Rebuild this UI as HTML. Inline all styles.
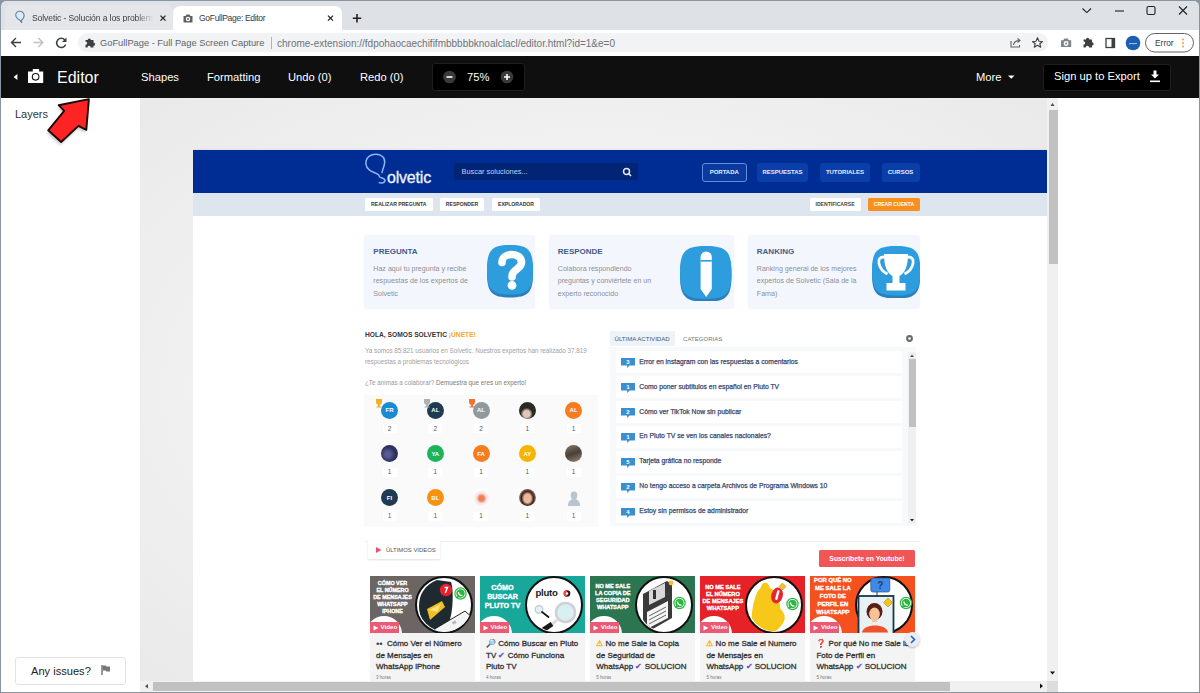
<!DOCTYPE html>
<html><head><meta charset="utf-8">
<style>
*{margin:0;padding:0;box-sizing:border-box}
html,body{width:1200px;height:693px;overflow:hidden;background:#fff;font-family:"Liberation Sans",sans-serif}
.a{position:absolute}
.t{position:absolute;white-space:nowrap;line-height:1}
</style></head><body>
<!-- window frame -->
<div class="a" style="left:0;top:0;width:1200px;height:693px;background:#8a95a2"></div>
<!-- tab strip -->
<div class="a" style="left:1px;top:1px;width:1198px;height:29px;background:#dee1e6;border-radius:5px 5px 0 0"></div>
<!-- inactive tab -->
<div class="a" style="left:5px;top:5px;width:168px;height:25px;background:#e4e6ea;border-radius:6px 6px 0 0"></div>
<!-- active tab -->
<div class="a" style="left:173px;top:6px;width:168.5px;height:24px;background:#fff;border-radius:7px 7px 0 0"></div>
<div class="t" style="left:32px;top:13.5px;font-size:8.6px;letter-spacing:-0.12px;color:#3c4043;width:122px;overflow:hidden;-webkit-mask-image:linear-gradient(90deg,#000 85%,transparent)">Solvetic - Solución a los problem</div>
<div class="t" style="left:199px;top:13.5px;font-size:8.6px;letter-spacing:-0.35px;color:#3c4043">GoFullPage: Editor</div>
<!-- toolbar -->
<div class="a" style="left:1px;top:30px;width:1198px;height:26px;background:#fff"></div>
<div class="a" style="left:78px;top:33px;width:970px;height:19px;background:#f1f3f4;border-radius:10px"></div>
<div class="t" style="left:100px;top:39px;font-size:9.3px;color:#5f6368">GoFullPage - Full Page Screen Capture</div>
<div class="a" style="left:270.5px;top:37px;width:1px;height:12px;background:#b0b4b8"></div>
<div class="t" style="left:277px;top:39px;font-size:10px;color:#6f7378">chrome-extension://fdpohaocaechififmbbbbbknoalclacl/editor.html?id=1&amp;e=0</div>


<!-- editor bar -->
<div class="a" style="left:1px;top:56px;width:1198px;height:42px;background:#0f0f0f"></div>
<div class="t" style="left:57px;top:70px;font-size:16px;color:#fff">Editor</div>
<div class="t" style="left:141px;top:72px;font-size:11.2px;color:#fff">Shapes</div>
<div class="t" style="left:207px;top:72px;font-size:11.2px;color:#fff">Formatting</div>
<div class="t" style="left:288px;top:72px;font-size:11.2px;color:#fff">Undo (0)</div>
<div class="t" style="left:360px;top:72px;font-size:11.2px;color:#fff">Redo (0)</div>
<div class="a" style="left:432px;top:63px;width:93px;height:28px;background:#000;border:1px solid #1e1e1e;border-radius:3px"></div>
<div class="t" style="left:467px;top:72px;font-size:11.2px;color:#fff">75%</div>
<div class="t" style="left:976px;top:72px;font-size:11.2px;color:#fff">More</div>
<div class="a" style="left:1042.5px;top:63.5px;width:128.5px;height:27px;background:#000;border:1px solid #1e1e1e;border-radius:3px"></div>
<div class="t" style="left:1054px;top:70.8px;font-size:11.2px;color:#fff">Sign up to Export</div>

<!-- chrome icons -->
<svg class="a" style="left:0;top:0" width="1200" height="98" viewBox="0 0 1200 98">
 <!-- favicon -->
 <path d="M21.3 20.5 C23.5 18.5 24.8 15.5 23.5 13.2 C22 10.8 17.8 10.6 16.3 13 C15 15 16 18 18.5 19.3 C19.8 20 20.6 20.6 21 21.8" fill="#dcebfb" stroke="#5f7f9f" stroke-width="1.1" stroke-linecap="round"/>
 <circle cx="21.6" cy="22" r="0.8" fill="#3f5f7f"/>
 <!-- close x inactive -->
 <g stroke="#202124" stroke-width="1.3"><path d="M160.5 15.6 L165.5 20.6 M165.5 15.6 L160.5 20.6"/></g>
 <!-- tab camera -->
 <path d="M183.5 16 h2 l1-1.6 h3 l1 1.6 h2 v6.5 h-9z" fill="#5f6368"/>
 <circle cx="188" cy="19" r="2.2" fill="#fff"/><circle cx="188" cy="19" r="1" fill="#5f6368"/>
 <!-- close x active -->
 <g stroke="#202124" stroke-width="1.3"><path d="M328 15.6 L333 20.6 M333 15.6 L328 20.6"/></g>
 <!-- new tab + -->
 <g stroke="#202124" stroke-width="1.6"><path d="M357 14 v8.4 M352.8 18.2 h8.4"/></g>
 <!-- window controls -->
 <g stroke="#202124" stroke-width="1.1" fill="none">
  <path d="M1082.5 8.5 L1086.8 12.6 L1091 8.5"/>
  <path d="M1115 11 h9"/>
  <rect x="1147" y="6.5" width="8" height="8" rx="1.5"/>
  <path d="M1179 6.5 L1187 14.5 M1187 6.5 L1179 14.5"/>
 </g>
 <!-- back/fwd/reload -->
 <g stroke="#3c4043" stroke-width="1.4" fill="none">
  <path d="M21 42.5 H11.8 M16 38 L11.5 42.5 L16 47"/>
 </g>
 <g stroke="#bdc1c6" stroke-width="1.4" fill="none">
  <path d="M33.5 42.5 H42.5 M38.3 38 L42.8 42.5 L38.3 47"/>
 </g>
 <g stroke="#3c4043" stroke-width="1.5" fill="none">
  <path d="M64.8 40 A4.6 4.6 0 1 0 65.6 44.5"/>
 </g>
 <path d="M66.5 37.5 v4.5 h-4.5z" fill="#3c4043"/>
 <!-- puzzle omnibox -->
 <path d="M85.5 40 h2.2 a1.6 1.6 0 1 1 3.2 0 h2.6 v2.6 a1.6 1.6 0 1 1 0 3.2 v1.6 h-2.8 a1.6 1.6 0 1 0 -3.2 0 h-2 v-2.6 a1.6 1.6 0 1 0 0 -3.2z" fill="#3c4043"/>
 <!-- share -->
 <g stroke="#5f6368" stroke-width="1.1" fill="none">
  <path d="M1011 41 v6 h8.5 v-2"/>
  <path d="M1013.5 45 c0.5-3 2.5-4.5 6-4.5 M1017.5 38.5 L1020 40.5 L1017.5 42.5"/>
 </g>
 <!-- star -->
 <path d="M1037.5 37.8 L1039 41.2 L1042.5 41.5 L1039.8 43.7 L1040.7 47.2 L1037.5 45.3 L1034.3 47.2 L1035.2 43.7 L1032.5 41.5 L1036 41.2Z" fill="none" stroke="#3c4043" stroke-width="1.1" stroke-linejoin="round"/>
 <!-- camera toolbar -->
 <path d="M1061 40.2 h2.3 l1.1-1.8 h3.4 l1.1 1.8 h2.3 v6.8 h-10.2z" fill="#80868b"/>
 <circle cx="1066.1" cy="43.5" r="2.4" fill="#fff"/><circle cx="1066.1" cy="43.5" r="1.1" fill="#80868b"/>
 <!-- puzzle toolbar -->
 <path d="M1083.5 39.5 h2.4 a1.7 1.7 0 1 1 3.4 0 h2.7 v2.7 a1.7 1.7 0 1 1 0 3.4 v1.8 h-2.9 a1.7 1.7 0 1 0 -3.4 0 h-2.2 v-2.8 a1.7 1.7 0 1 0 0 -3.4z" fill="#3c4043"/>
 <!-- side panel -->
 <rect x="1106" y="38.5" width="8.5" height="9" fill="none" stroke="#3c4043" stroke-width="1.3"/>
 <rect x="1111.5" y="38.5" width="3" height="9" fill="#3c4043"/>
 <!-- avatar -->
 <circle cx="1133" cy="43" r="7.3" fill="#1a5fb4"/>
 <path d="M1129 43.6 h8" stroke="#cfe0f5" stroke-width="0.8"/>
 <!-- error pill -->
 <rect x="1145.5" y="33.5" width="48" height="18.5" rx="9.25" fill="#fff" stroke="#5f6368" stroke-width="1"/>
 <circle cx="1183" cy="39.5" r="0.9" fill="#e8912d"/><circle cx="1183" cy="43" r="0.9" fill="#e8912d"/><circle cx="1183" cy="46.5" r="0.9" fill="#e8912d"/>
 <!-- editor bar icons -->
 <path d="M17.4 74 L13.6 77 L17.4 80z" fill="#fff"/>
 <path d="M28 71.6 h4.8 v-2.5 h6.3 v2.5 h4.1 v11.4 h-15.2z" fill="#fff"/>
 <circle cx="35.6" cy="76.8" r="3.3" fill="none" stroke="#0f0f0f" stroke-width="1.1"/>
 <!-- zoom -->
 <circle cx="449.5" cy="77" r="6.3" fill="#3a3a3a"/>
 <path d="M446.5 77 h6" stroke="#fff" stroke-width="1.6"/>
 <circle cx="507" cy="77" r="6.3" fill="#3a3a3a"/>
 <path d="M504 77 h6 M507 74 v6" stroke="#fff" stroke-width="1.6"/>
 <!-- caret -->
 <path d="M1008 75.5 h6.5 l-3.25 3.3z" fill="#fff"/>
 <!-- download -->
 <path d="M1153.5 70.5 h3 v4 h2.5 l-4 4 l-4-4 h2.5z" fill="#fff"/>
 <rect x="1150" y="80.5" width="10" height="1.6" fill="#fff"/>
</svg>
<div class="t" style="left:1155px;top:38.5px;font-size:8.4px;color:#3c4043">Error</div>

<!-- sidebar -->
<div class="a" style="left:1px;top:98px;width:139px;height:594px;background:#fff"></div>
<div class="t" style="left:15px;top:108.5px;font-size:11px;color:#333">Layers</div>
<div class="a" style="left:15px;top:657px;width:111px;height:28px;background:#fff;border:1px solid #e2e2e2;border-radius:3px"></div>
<div class="t" style="left:31px;top:666px;font-size:11.1px;color:#222">Any issues?</div>

<!-- canvas -->
<div class="a" style="left:140px;top:98px;width:907px;height:583px;background:radial-gradient(ellipse 75% 75% at 50% 50%,#f4f4f4 40%,#e8e8e8 100%)"></div>
<!-- right panel -->
<div class="a" style="left:1058px;top:98px;width:141px;height:594px;background:#fff"></div>
<!-- v scrollbar -->
<div class="a" style="left:1047px;top:98px;width:11px;height:583px;background:#f0f0f0"></div>
<div class="a" style="left:1049px;top:110px;width:9px;height:154px;background:#c1c1c1"></div>
<!-- h scrollbar -->
<div class="a" style="left:140px;top:681px;width:918px;height:11px;background:#f0f0f0"></div>
<div class="a" style="left:153px;top:682px;width:797px;height:9px;background:#c1c1c1"></div>

<svg class="a" style="left:0;top:0;z-index:2" width="1200" height="693">
 <path d="M1050.5 106 L1052.5 103 L1054.5 106z" fill="#505050"/>
 <path d="M1050 671.5 L1052.5 674.5 L1055 671.5z" fill="#111"/>
 <path d="M148 684 L145 686.2 L148 688.4z" fill="#505050"/>
 <path d="M1040 683.5 L1043 686 L1040 688.5z" fill="#111"/>
 <rect x="1047" y="681" width="11" height="11" fill="#dcdcdc"/>
</svg>
<!-- red arrow -->
<svg class="a" style="left:0;top:90px;z-index:5" width="120" height="70" viewBox="0 90 120 70">
 <defs><filter id="sh" x="-30%" y="-30%" width="160%" height="160%"><feGaussianBlur stdDeviation="1.6"/></filter></defs>
 <path d="M88.9 99.1 L86.3 129.8 L78.5 125.9 L61.2 142 L48.2 130.3 L64.2 110.8 L58.6 105.2 Z" fill="rgba(0,0,0,0.22)" transform="translate(-1,3)" filter="url(#sh)"/>
 <path d="M88.9 99.1 L86.3 129.8 L78.5 125.9 L61.2 142 L48.2 130.3 L64.2 110.8 L58.6 105.2 Z" fill="#ff2424" stroke="#1e0808" stroke-width="1.9" stroke-linejoin="round"/>
</svg>
<svg class="a" style="left:100px;top:664px" width="12" height="12"><path d="M2 1 v10" stroke="#666" stroke-width="1.3"/><path d="M2.5 1.5 h3 l1 1 h3.5 v5 h-3.5 l-1-1 h-3z" fill="#777"/></svg>
<!-- page -->
<div class="a" style="left:0;top:0;width:1200px;height:693px;clip-path:inset(98px 153px 12px 193px);z-index:1">
<div class="a" style="left:193px;top:150px;width:854px;height:531px;background:#fff;box-shadow:0 0 3px rgba(0,0,0,0.10)"></div>
<!-- PAGE START -->
<div class="a" style="left:193px;top:150px;width:854px;height:43px;background:#002d94"></div>
<div class="a" style="left:193px;top:193px;width:854px;height:22.5px;background:#dde5ef"></div>
<svg class="a" style="left:360px;top:150px" width="80" height="40" viewBox="0 0 80 40">
<path d="M22 22.5 C23.5 17 27 10.5 22.5 6.5 C18 3 8.5 3.5 6.2 10.5 C4.5 16.5 9 20.5 14 22.5 C17 23.8 19.5 24.5 19.2 26.3 C19 27.8 24.8 27.8 25 30.2 C25.2 32.8 21 33.5 19.2 32.6" fill="none" stroke="#8fb4f5" stroke-width="1.5" stroke-linecap="round"/>
</svg>
<div class="t" style="left:387px;top:170px;font-size:16px;color:#eef3ff;letter-spacing:-0.2px;-webkit-text-stroke:0.3px #eef3ff">olvetic</div>
<div class="a" style="left:454px;top:162.5px;width:184px;height:17.5px;background:#022474;border-radius:2px"></div>
<div class="t" style="left:461.5px;top:168px;font-size:7.4px;color:#c5d2f0">Buscar soluciones...</div>
<svg class="a" style="left:620px;top:165px" width="14" height="14"><circle cx="6.5" cy="6.5" r="3" fill="none" stroke="#e6ecff" stroke-width="1.5"/><path d="M8.7 8.7 L11 11" stroke="#e6ecff" stroke-width="1.6"/></svg>
<div class="a" style="left:701.5px;top:162.5px;width:45.5px;height:19px;background:#0a3a9e;border:1px solid #5f8de0;border-radius:3px;"></div>
<div class="t" style="left:701.5px;top:169.3px;width:45.5px;text-align:center;font-size:6px;font-weight:700;color:#e8efff">PORTADA</div>
<div class="a" style="left:757px;top:162.5px;width:51px;height:19px;background:#0a3ea8;border-radius:3px;"></div>
<div class="t" style="left:757px;top:169.3px;width:51px;text-align:center;font-size:6px;font-weight:700;color:#e8efff">RESPUESTAS</div>
<div class="a" style="left:820px;top:162.5px;width:50px;height:19px;background:#0a3ea8;border-radius:3px;"></div>
<div class="t" style="left:820px;top:169.3px;width:50px;text-align:center;font-size:6px;font-weight:700;color:#e8efff">TUTORIALES</div>
<div class="a" style="left:881.5px;top:162.5px;width:38px;height:19px;background:#0a3ea8;border-radius:3px;"></div>
<div class="t" style="left:881.5px;top:169.3px;width:38px;text-align:center;font-size:6px;font-weight:700;color:#e8efff">CURSOS</div>
<div class="a" style="left:365px;top:197.5px;width:67.5px;height:13px;background:#fff;border-radius:1.5px"></div>
<div class="t" style="left:365px;top:202.2px;width:67.5px;text-align:center;font-size:5.1px;font-weight:700;color:#333">REALIZAR PREGUNTA</div>
<div class="a" style="left:440px;top:197.5px;width:44px;height:13px;background:#fff;border-radius:1.5px"></div>
<div class="t" style="left:440px;top:202.2px;width:44px;text-align:center;font-size:5.1px;font-weight:700;color:#333">RESPONDER</div>
<div class="a" style="left:492px;top:197.5px;width:48px;height:13px;background:#fff;border-radius:1.5px"></div>
<div class="t" style="left:492px;top:202.2px;width:48px;text-align:center;font-size:5.1px;font-weight:700;color:#333">EXPLORADOR</div>
<div class="a" style="left:809.5px;top:197.5px;width:51px;height:13px;background:#fff;border-radius:1.5px"></div>
<div class="t" style="left:809.5px;top:202.2px;width:51px;text-align:center;font-size:5.1px;font-weight:700;color:#444">IDENTIFICARSE</div>
<div class="a" style="left:868px;top:197.5px;width:52px;height:13px;background:#f7901e;border-radius:1.5px"></div>
<div class="t" style="left:868px;top:202.2px;width:52px;text-align:center;font-size:5.1px;font-weight:700;color:#fff">CREAR CUENTA</div>
<div class="a" style="left:364px;top:235px;width:171px;height:74px;background:#f3f7fd;border-radius:3px;box-shadow:0 0 2px rgba(0,0,0,0.04)"></div>
<div class="t" style="left:373.3px;top:247.5px;font-size:8px;font-weight:700;color:#3f5b8e">PREGUNTA</div>
<div class="t" style="left:373.3px;top:265.5px;font-size:7.1px;color:#8a8f99">Haz aquí tu pregunta y recibe</div>
<div class="t" style="left:373.3px;top:278.3px;font-size:7.1px;color:#8a8f99">respuestas de los expertos de</div>
<div class="t" style="left:373.3px;top:291.1px;font-size:7.1px;color:#8a8f99">Solvetic</div>
<svg class="a" style="left:486.7px;top:245px" width="46" height="52.5" viewBox="0 0 46 52.5"><path d="M23.0 0 C41.4 0 46.0 5.0 46.0 24.8 C46.0 44.6 41.4 49.5 23.0 49.5 C4.6 49.5 0 44.6 0 24.8 C0 5.0 4.6 0 23.0 0Z" fill="#2a7fbf" transform="translate(0,3)"/><path d="M23.0 0 C41.4 0 46.0 5.0 46.0 24.8 C46.0 44.6 41.4 49.5 23.0 49.5 C4.6 49.5 0 44.6 0 24.8 C0 5.0 4.6 0 23.0 0Z" fill="#2e9ddd"/><path d="M15 17.5 C15 7 34.5 6.5 34.5 17.5 C34.5 24 25 24.5 25 31 L25 32" fill="none" stroke="#fff" stroke-width="7.6" stroke-linecap="round"/><circle cx="25" cy="40.3" r="4.4" fill="#fff"/></svg>
<div class="a" style="left:548.5px;top:235px;width:185px;height:74px;background:#f3f7fd;border-radius:3px;box-shadow:0 0 2px rgba(0,0,0,0.04)"></div>
<div class="t" style="left:557.8px;top:247.5px;font-size:8px;font-weight:700;color:#3f5b8e">RESPONDE</div>
<div class="t" style="left:557.8px;top:265.5px;font-size:7.1px;color:#8a8f99">Colabora respondiendo</div>
<div class="t" style="left:557.8px;top:278.3px;font-size:7.1px;color:#8a8f99">preguntas y conviértete en un</div>
<div class="t" style="left:557.8px;top:291.1px;font-size:7.1px;color:#8a8f99">experto reconocido</div>
<svg class="a" style="left:680.3px;top:245.5px" width="51.5" height="55.7" viewBox="0 0 51.5 55.7"><path d="M25.8 0 C46.4 0 51.5 5.3 51.5 26.4 C51.5 47.4 46.4 52.7 25.8 52.7 C5.2 52.7 0 47.4 0 26.4 C0 5.3 5.2 0 25.8 0Z" fill="#2a7fbf" transform="translate(0,3)"/><path d="M25.8 0 C46.4 0 51.5 5.3 51.5 26.4 C51.5 47.4 46.4 52.7 25.8 52.7 C5.2 52.7 0 47.4 0 26.4 C0 5.3 5.2 0 25.8 0Z" fill="#2e9ddd"/><path d="M20.6 11 a5.6 5.6 0 0 1 11.2 0 v32 l-5.6 8 l-5.6 -8z" fill="#fff"/><rect x="20.6" y="14" width="11.2" height="1.6" fill="#2e9ddd"/></svg>
<div class="a" style="left:747.5px;top:235px;width:172.5px;height:74px;background:#f3f7fd;border-radius:3px;box-shadow:0 0 2px rgba(0,0,0,0.04)"></div>
<div class="t" style="left:756.8px;top:247.5px;font-size:8px;font-weight:700;color:#3f5b8e">RANKING</div>
<div class="t" style="left:756.8px;top:265.5px;font-size:7.1px;color:#8a8f99">Ranking general de los mejores</div>
<div class="t" style="left:756.8px;top:278.3px;font-size:7.1px;color:#8a8f99">expertos de Solvetic (Sala de la</div>
<div class="t" style="left:756.8px;top:291.1px;font-size:7.1px;color:#8a8f99">Fama)</div>
<svg class="a" style="left:871.7px;top:245.5px" width="48.3" height="52.5" viewBox="0 0 48.3 52.5"><path d="M24.1 0 C43.5 0 48.3 5.0 48.3 24.8 C48.3 44.6 43.5 49.5 24.1 49.5 C4.8 49.5 0 44.6 0 24.8 C0 5.0 4.8 0 24.1 0Z" fill="#2a7fbf" transform="translate(0,3)"/><path d="M24.1 0 C43.5 0 48.3 5.0 48.3 24.8 C48.3 44.6 43.5 49.5 24.1 49.5 C4.8 49.5 0 44.6 0 24.8 C0 5.0 4.8 0 24.1 0Z" fill="#2e9ddd"/><path d="M12 8 h24 c0 12 -3 19 -8.5 22 v7 h6 v7.5 h-19 v-7.5 h6 v-7 c-5.5 -3 -8.5 -10 -8.5 -22z" fill="#fff"/><path d="M12 11 c-4 0 -6 2 -5 6.5 c1 5 4 8.5 8.5 10.5 M36 11 c4 0 6 2 5 6.5 c-1 5 -4 8.5 -8.5 10.5" fill="none" stroke="#fff" stroke-width="2.8"/></svg>
<div class="t" style="left:365px;top:331.5px;font-size:6.67px;font-weight:700;color:#333">HOLA, SOMOS SOLVETIC <span style="color:#f5a623">¡ÚNETE!</span></div>
<div class="t" style="left:365px;top:347.5px;font-size:6.3px;color:#a0a0a0">Ya somos 85.821 usuarios en Solvetic. Nuestros expertos han realizado 37.819</div>
<div class="t" style="left:365px;top:359px;font-size:6.3px;color:#a0a0a0">respuestas a problemas tecnológicos</div>
<div class="t" style="left:365px;top:380px;font-size:6.3px;color:#999">¿Te animas a colaborar? <span style="color:#7a7a7a">Demuestra que eres un experto!</span></div>
<div class="a" style="left:364px;top:395px;width:234px;height:131.5px;background:#fafafa"></div>
<div class="a" style="left:381.0px;top:401.7px;width:17px;height:17px;border-radius:50%;background:#1a8ad4"></div>
<div class="t" style="left:381.0px;top:407.2px;width:17px;text-align:center;font-size:6px;font-weight:700;color:#fff">FR</div>
<div class="a" style="left:382.5px;top:424.2px;width:14px;height:9px;background:#fff"></div>
<div class="t" style="left:382.5px;top:425.5px;width:14px;text-align:center;font-size:6.5px;color:#555">2</div>
<div class="a" style="left:426.8px;top:401.7px;width:17px;height:17px;border-radius:50%;background:#1f3a52"></div>
<div class="t" style="left:426.8px;top:407.2px;width:17px;text-align:center;font-size:6px;font-weight:700;color:#fff">AL</div>
<div class="a" style="left:428.3px;top:424.2px;width:14px;height:9px;background:#fff"></div>
<div class="t" style="left:428.3px;top:425.5px;width:14px;text-align:center;font-size:6.5px;color:#555">2</div>
<div class="a" style="left:472.5px;top:401.7px;width:17px;height:17px;border-radius:50%;background:#8f9aa0"></div>
<div class="t" style="left:472.5px;top:407.2px;width:17px;text-align:center;font-size:6px;font-weight:700;color:#fff">AL</div>
<div class="a" style="left:474px;top:424.2px;width:14px;height:9px;background:#fff"></div>
<div class="t" style="left:474px;top:425.5px;width:14px;text-align:center;font-size:6.5px;color:#555">2</div>
<div class="a" style="left:518.8px;top:401.7px;width:17px;height:17px;border-radius:50%;background:radial-gradient(circle at 45% 70%,#e0c8b8 0 22%,#2a2a22 40% 70%,#6a7a50 100%)"></div>
<div class="a" style="left:520.3px;top:424.2px;width:14px;height:9px;background:#fff"></div>
<div class="t" style="left:520.3px;top:425.5px;width:14px;text-align:center;font-size:6.5px;color:#555">1</div>
<div class="a" style="left:565.1px;top:401.7px;width:17px;height:17px;border-radius:50%;background:#f57c1f"></div>
<div class="t" style="left:565.1px;top:407.2px;width:17px;text-align:center;font-size:6px;font-weight:700;color:#fff">AL</div>
<div class="a" style="left:566.6px;top:424.2px;width:14px;height:9px;background:#fff"></div>
<div class="t" style="left:566.6px;top:425.5px;width:14px;text-align:center;font-size:6.5px;color:#555">1</div>
<div class="a" style="left:381.0px;top:445.0px;width:17px;height:17px;border-radius:50%;background:radial-gradient(circle at 40% 55%,#5a5a90 0 18%,#2a2f5a 55%,#403868 100%)"></div>
<div class="a" style="left:382.5px;top:467.5px;width:14px;height:9px;background:#fff"></div>
<div class="t" style="left:382.5px;top:468.8px;width:14px;text-align:center;font-size:6.5px;color:#555">1</div>
<div class="a" style="left:426.8px;top:445.0px;width:17px;height:17px;border-radius:50%;background:#1bb45a"></div>
<div class="t" style="left:426.8px;top:450.5px;width:17px;text-align:center;font-size:6px;font-weight:700;color:#fff">YA</div>
<div class="a" style="left:428.3px;top:467.5px;width:14px;height:9px;background:#fff"></div>
<div class="t" style="left:428.3px;top:468.8px;width:14px;text-align:center;font-size:6.5px;color:#555">1</div>
<div class="a" style="left:472.5px;top:445.0px;width:17px;height:17px;border-radius:50%;background:#f57c1f"></div>
<div class="t" style="left:472.5px;top:450.5px;width:17px;text-align:center;font-size:6px;font-weight:700;color:#fff">FA</div>
<div class="a" style="left:474px;top:467.5px;width:14px;height:9px;background:#fff"></div>
<div class="t" style="left:474px;top:468.8px;width:14px;text-align:center;font-size:6.5px;color:#555">1</div>
<div class="a" style="left:518.8px;top:445.0px;width:17px;height:17px;border-radius:50%;background:#f4b400"></div>
<div class="t" style="left:518.8px;top:450.5px;width:17px;text-align:center;font-size:6px;font-weight:700;color:#fff">AY</div>
<div class="a" style="left:520.3px;top:467.5px;width:14px;height:9px;background:#fff"></div>
<div class="t" style="left:520.3px;top:468.8px;width:14px;text-align:center;font-size:6.5px;color:#555">1</div>
<div class="a" style="left:565.1px;top:445.0px;width:17px;height:17px;border-radius:50%;background:linear-gradient(160deg,#8a7a6a,#4a4038 50%,#9a8a78)"></div>
<div class="a" style="left:566.6px;top:467.5px;width:14px;height:9px;background:#fff"></div>
<div class="t" style="left:566.6px;top:468.8px;width:14px;text-align:center;font-size:6.5px;color:#555">1</div>
<div class="a" style="left:381.0px;top:489.1px;width:17px;height:17px;border-radius:50%;background:#1f3a52"></div>
<div class="t" style="left:381.0px;top:494.6px;width:17px;text-align:center;font-size:6px;font-weight:700;color:#fff">FI</div>
<div class="a" style="left:382.5px;top:511.6px;width:14px;height:9px;background:#fff"></div>
<div class="t" style="left:382.5px;top:512.9px;width:14px;text-align:center;font-size:6.5px;color:#555">1</div>
<div class="a" style="left:426.8px;top:489.1px;width:17px;height:17px;border-radius:50%;background:#f5920f"></div>
<div class="t" style="left:426.8px;top:494.6px;width:17px;text-align:center;font-size:6px;font-weight:700;color:#fff">BL</div>
<div class="a" style="left:428.3px;top:511.6px;width:14px;height:9px;background:#fff"></div>
<div class="t" style="left:428.3px;top:512.9px;width:14px;text-align:center;font-size:6.5px;color:#555">1</div>
<div class="a" style="left:472.5px;top:489.1px;width:17px;height:17px;border-radius:50%;background:radial-gradient(circle at 50% 55%,#f08050 0 20%,#f5e0e0 40%,#ffffff 70%)"></div>
<div class="a" style="left:474px;top:511.6px;width:14px;height:9px;background:#fff"></div>
<div class="t" style="left:474px;top:512.9px;width:14px;text-align:center;font-size:6.5px;color:#555">1</div>
<div class="a" style="left:518.8px;top:489.1px;width:17px;height:17px;border-radius:50%;background:radial-gradient(ellipse 60% 70% at 50% 55%,#eab8a0 0 35%,#3a2018 60%,#e0d0c8 100%)"></div>
<div class="a" style="left:520.3px;top:511.6px;width:14px;height:9px;background:#fff"></div>
<div class="t" style="left:520.3px;top:512.9px;width:14px;text-align:center;font-size:6.5px;color:#555">1</div>
<svg class="a" style="left:564.6px;top:488.6px" width="18" height="18"><ellipse cx="9" cy="6.5" rx="3.3" ry="4" fill="#b8c4d0"/><path d="M3 17 c0-5 2.5-7 6-7 s6 2 6 7z" fill="#b8c4d0"/></svg>
<div class="a" style="left:566.6px;top:511.6px;width:14px;height:9px;background:#fff"></div>
<div class="t" style="left:566.6px;top:512.9px;width:14px;text-align:center;font-size:6.5px;color:#555">1</div>
<svg class="a" style="left:374px;top:398px" width="10" height="10"><path d="M2 1h6v3c0 2-1.3 3-3 3s-3-1-3-3z M4 7h2v1.5h1.5v1h-5v-1h1.5z" fill="#f0b020"/></svg>
<svg class="a" style="left:422px;top:398px" width="10" height="10"><path d="M2 1h6v3c0 2-1.3 3-3 3s-3-1-3-3z M4 7h2v1.5h1.5v1h-5v-1h1.5z" fill="#b0b0b0"/></svg>
<svg class="a" style="left:467px;top:398px" width="10" height="10"><path d="M2 1h6v3c0 2-1.3 3-3 3s-3-1-3-3z M4 7h2v1.5h1.5v1h-5v-1h1.5z" fill="#f07030"/></svg>
<div class="a" style="left:609.5px;top:331px;width:65.5px;height:15px;background:#eef3fa"></div>
<div class="t" style="left:614.5px;top:336px;font-size:6.07px;color:#4a5570">ÚLTIMA ACTIVIDAD</div>
<div class="t" style="left:683px;top:336px;font-size:6.07px;color:#777">CATEGORIAS</div>
<svg class="a" style="left:905px;top:334px" width="9" height="9"><circle cx="4.5" cy="4.5" r="3.4" fill="#6a6a6a"/><circle cx="4.5" cy="4.5" r="1.3" fill="#fff"/></svg>
<div class="a" style="left:610px;top:347px;width:306px;height:179px;background:#f8f9fb"></div>
<div class="a" style="left:615.5px;top:351.2px;width:286px;height:22px;background:#fff"></div>
<svg class="a" style="left:620.5px;top:358.0px" width="14" height="11"><path d="M0 0h14v7.5h-5.5l-2 2.5l-0.5-2.5h-6z" fill="#3a8fd0"/><text x="7" y="6.2" text-anchor="middle" font-family="Liberation Sans" font-size="6" font-weight="700" fill="#fff">3</text></svg>
<div class="t" style="left:639.3px;top:358.59999999999997px;font-size:6.77px;color:#3a4a70;font-weight:400;-webkit-text-stroke-width:0.25px;letter-spacing:0px">Error en instagram con las respuestas a comentarios</div>
<div class="a" style="left:615.5px;top:376.15px;width:286px;height:22px;background:#fff"></div>
<svg class="a" style="left:620.5px;top:382.95px" width="14" height="11"><path d="M0 0h14v7.5h-5.5l-2 2.5l-0.5-2.5h-6z" fill="#3a8fd0"/><text x="7" y="6.2" text-anchor="middle" font-family="Liberation Sans" font-size="6" font-weight="700" fill="#fff">1</text></svg>
<div class="t" style="left:639.3px;top:383.54999999999995px;font-size:6.77px;color:#3a4a70;font-weight:400;-webkit-text-stroke-width:0.25px;letter-spacing:0px">Como poner subtitulos en español en Pluto TV</div>
<div class="a" style="left:615.5px;top:401.09999999999997px;width:286px;height:22px;background:#fff"></div>
<svg class="a" style="left:620.5px;top:407.9px" width="14" height="11"><path d="M0 0h14v7.5h-5.5l-2 2.5l-0.5-2.5h-6z" fill="#3a8fd0"/><text x="7" y="6.2" text-anchor="middle" font-family="Liberation Sans" font-size="6" font-weight="700" fill="#fff">2</text></svg>
<div class="t" style="left:639.3px;top:408.49999999999994px;font-size:6.77px;color:#3a4a70;font-weight:400;-webkit-text-stroke-width:0.25px;letter-spacing:0px">Cómo ver TikTok Now sin publicar</div>
<div class="a" style="left:615.5px;top:426.04999999999995px;width:286px;height:22px;background:#fff"></div>
<svg class="a" style="left:620.5px;top:432.84999999999997px" width="14" height="11"><path d="M0 0h14v7.5h-5.5l-2 2.5l-0.5-2.5h-6z" fill="#3a8fd0"/><text x="7" y="6.2" text-anchor="middle" font-family="Liberation Sans" font-size="6" font-weight="700" fill="#fff">1</text></svg>
<div class="t" style="left:639.3px;top:433.44999999999993px;font-size:6.77px;color:#3a4a70;font-weight:400;-webkit-text-stroke-width:0.25px;letter-spacing:0px">En Pluto TV se ven los canales nacionales?</div>
<div class="a" style="left:615.5px;top:451.0px;width:286px;height:22px;background:#fff"></div>
<svg class="a" style="left:620.5px;top:457.8px" width="14" height="11"><path d="M0 0h14v7.5h-5.5l-2 2.5l-0.5-2.5h-6z" fill="#3a8fd0"/><text x="7" y="6.2" text-anchor="middle" font-family="Liberation Sans" font-size="6" font-weight="700" fill="#fff">5</text></svg>
<div class="t" style="left:639.3px;top:458.4px;font-size:6.77px;color:#3a4a70;font-weight:400;-webkit-text-stroke-width:0.25px;letter-spacing:0px">Tarjeta gráfica no responde</div>
<div class="a" style="left:615.5px;top:475.95px;width:286px;height:22px;background:#fff"></div>
<svg class="a" style="left:620.5px;top:482.75px" width="14" height="11"><path d="M0 0h14v7.5h-5.5l-2 2.5l-0.5-2.5h-6z" fill="#3a8fd0"/><text x="7" y="6.2" text-anchor="middle" font-family="Liberation Sans" font-size="6" font-weight="700" fill="#fff">2</text></svg>
<div class="t" style="left:639.3px;top:483.34999999999997px;font-size:6.77px;color:#3a4a70;font-weight:400;-webkit-text-stroke-width:0.25px;letter-spacing:0px">No tengo acceso a carpeta Archivos de Programa Windows 10</div>
<div class="a" style="left:615.5px;top:500.9px;width:286px;height:22px;background:#fff"></div>
<svg class="a" style="left:620.5px;top:507.7px" width="14" height="11"><path d="M0 0h14v7.5h-5.5l-2 2.5l-0.5-2.5h-6z" fill="#3a8fd0"/><text x="7" y="6.2" text-anchor="middle" font-family="Liberation Sans" font-size="6" font-weight="700" fill="#fff">4</text></svg>
<div class="t" style="left:639.3px;top:508.29999999999995px;font-size:6.77px;color:#3a4a70;font-weight:400;-webkit-text-stroke-width:0.25px;letter-spacing:0px">Estoy sin permisos de administrador</div>
<div class="a" style="left:908px;top:352px;width:8px;height:172px;background:#f0f0f0"></div>
<div class="a" style="left:909px;top:358.5px;width:6.5px;height:68.5px;background:#c1c1c1"></div>
<svg class="a" style="left:908px;top:352px" width="8" height="172"><path d="M2 5 L4 2.5 L6 5z" fill="#555"/><path d="M2 167 L4 169.5 L6 167z" fill="#222"/></svg>
<div class="a" style="left:364px;top:541px;width:556px;height:1px;background:#eeeeee"></div>
<div class="a" style="left:367.5px;top:541px;width:72px;height:18px;background:#fff;box-shadow:0 1px 2px rgba(0,0,0,0.12)"></div>
<svg class="a" style="left:375px;top:546px" width="8" height="8"><path d="M1 1 L6.5 4 L1 7z" fill="#e8556a"/></svg>
<div class="t" style="left:386px;top:547.5px;font-size:5.9px;color:#555">ÚLTIMOS VIDEOS</div>
<div class="a" style="left:819px;top:550px;width:96px;height:17px;background:#f05656;border-radius:1.5px"></div>
<div class="t" style="left:819px;top:555.8px;width:96px;text-align:center;font-size:6.8px;font-weight:700;color:#fff">Suscríbete en Youtube!</div>
<div class="a" style="left:370px;top:576px;width:104.6px;height:57px;background:#6b6663;overflow:hidden">
<div class="t" style="left:0px;top:4.5px;width:45px;text-align:center;font-size:5.4px;font-weight:700;color:#ffffff;letter-spacing:0px;-webkit-text-stroke:0.35px #ffffff">CÓMO VER</div>
<div class="t" style="left:0px;top:11.6px;width:45px;text-align:center;font-size:5.4px;font-weight:700;color:#ffffff;letter-spacing:0px;-webkit-text-stroke:0.35px #ffffff">EL NÚMERO</div>
<div class="t" style="left:0px;top:18.7px;width:45px;text-align:center;font-size:5.4px;font-weight:700;color:#ffffff;letter-spacing:0px;-webkit-text-stroke:0.35px #ffffff">DE MENSAJES</div>
<div class="t" style="left:0px;top:25.8px;width:45px;text-align:center;font-size:5.4px;font-weight:700;color:#ffffff;letter-spacing:0px;-webkit-text-stroke:0.35px #ffffff">WHATSAPP</div>
<div class="t" style="left:0px;top:32.9px;width:45px;text-align:center;font-size:5.4px;font-weight:700;color:#ffffff;letter-spacing:0px;-webkit-text-stroke:0.35px #ffffff">IPHONE</div>
<div class="a" style="left:45.099999999999994px;top:-0.5px;width:58px;height:58px;border-radius:50%;background:#fff;border:2px solid #111"></div>
<div class="a" style="left:-4px;top:40px;width:36px;height:36px;border-radius:50%;background:#fff"></div>
<div class="a" style="left:0;top:46px;width:29px;height:11px;background:#ea5a72"></div>
<svg class="a" style="left:3px;top:48.5px" width="6" height="6"><path d="M0.5 0.5 L5.5 3 L0.5 5.5z" fill="#fff"/></svg>
<div class="t" style="left:10.5px;top:48.3px;font-size:6.2px;font-weight:700;color:#fff">Video</div>
</div>
<div class="a" style="left:370px;top:633px;width:104.6px;height:48px;background:#f4f4f4"></div>
<div class="t" style="left:376px;top:640.0px;font-size:8px;font-weight:400;-webkit-text-stroke-width:0.3px;color:#333"><span style="font-size:5px;letter-spacing:0.2px;position:relative;top:-1px">●●</span>&nbsp; Cómo Ver el Número</div>
<div class="t" style="left:376px;top:651.6px;font-size:8px;font-weight:400;-webkit-text-stroke-width:0.3px;color:#333">de Mensajes en</div>
<div class="t" style="left:376px;top:663.2px;font-size:8px;font-weight:400;-webkit-text-stroke-width:0.3px;color:#333">WhatsApp iPhone</div>
<div class="t" style="left:376px;top:675.5px;font-size:4.5px;color:#777">3 horas</div>
<div class="a" style="left:480px;top:576px;width:104.6px;height:57px;background:#17a89a;overflow:hidden">
<div class="t" style="left:0px;top:7.9px;width:45px;text-align:center;font-size:7.2px;font-weight:700;color:#ffffff;letter-spacing:0px;-webkit-text-stroke:0.35px #ffffff">CÓMO</div>
<div class="t" style="left:0px;top:16.9px;width:45px;text-align:center;font-size:7.2px;font-weight:700;color:#ffffff;letter-spacing:0px;-webkit-text-stroke:0.35px #ffffff">BUSCAR</div>
<div class="t" style="left:0px;top:25.9px;width:45px;text-align:center;font-size:7.2px;font-weight:700;color:#ffffff;letter-spacing:0px;-webkit-text-stroke:0.35px #ffffff">PLUTO TV</div>
<div class="a" style="left:45.099999999999994px;top:-0.5px;width:58px;height:58px;border-radius:50%;background:#fff;border:2px solid #111"></div>
<div class="a" style="left:-4px;top:40px;width:36px;height:36px;border-radius:50%;background:#fff"></div>
<div class="a" style="left:0;top:46px;width:29px;height:11px;background:#ea5a72"></div>
<svg class="a" style="left:3px;top:48.5px" width="6" height="6"><path d="M0.5 0.5 L5.5 3 L0.5 5.5z" fill="#fff"/></svg>
<div class="t" style="left:10.5px;top:48.3px;font-size:6.2px;font-weight:700;color:#fff">Video</div>
</div>
<div class="a" style="left:480px;top:633px;width:104.6px;height:48px;background:#f4f4f4"></div>
<div class="t" style="left:486px;top:640.0px;font-size:8px;font-weight:400;-webkit-text-stroke-width:0.3px;color:#333"><span style="color:#2a6fd0">🔎</span> Cómo Buscar en Pluto</div>
<div class="t" style="left:486px;top:651.6px;font-size:8px;font-weight:400;-webkit-text-stroke-width:0.3px;color:#333">TV <span style="color:#6a4fc8">✔</span> Cómo Funciona</div>
<div class="t" style="left:486px;top:663.2px;font-size:8px;font-weight:400;-webkit-text-stroke-width:0.3px;color:#333">Pluto TV</div>
<div class="t" style="left:486px;top:675.5px;font-size:4.5px;color:#777">4 horas</div>
<div class="a" style="left:590.3px;top:576px;width:104.6px;height:57px;background:#2b7550;overflow:hidden">
<div class="t" style="left:0px;top:7.5px;width:45px;text-align:center;font-size:5.6px;font-weight:700;color:#ffffff;letter-spacing:0px;-webkit-text-stroke:0.35px #ffffff">NO ME SALE</div>
<div class="t" style="left:0px;top:14.8px;width:45px;text-align:center;font-size:5.6px;font-weight:700;color:#ffffff;letter-spacing:0px;-webkit-text-stroke:0.35px #ffffff">LA COPIA DE</div>
<div class="t" style="left:0px;top:22.1px;width:45px;text-align:center;font-size:5.6px;font-weight:700;color:#ffffff;letter-spacing:0px;-webkit-text-stroke:0.35px #ffffff">SEGURIDAD</div>
<div class="t" style="left:0px;top:29.4px;width:45px;text-align:center;font-size:5.6px;font-weight:700;color:#ffffff;letter-spacing:0px;-webkit-text-stroke:0.35px #ffffff">WHATSAPP</div>
<div class="a" style="left:45.099999999999994px;top:-0.5px;width:58px;height:58px;border-radius:50%;background:#fff;border:2px solid #111"></div>
<div class="a" style="left:-4px;top:40px;width:36px;height:36px;border-radius:50%;background:#fff"></div>
<div class="a" style="left:0;top:46px;width:29px;height:11px;background:#ea5a72"></div>
<svg class="a" style="left:3px;top:48.5px" width="6" height="6"><path d="M0.5 0.5 L5.5 3 L0.5 5.5z" fill="#fff"/></svg>
<div class="t" style="left:10.5px;top:48.3px;font-size:6.2px;font-weight:700;color:#fff">Video</div>
</div>
<div class="a" style="left:590.3px;top:633px;width:104.6px;height:48px;background:#f4f4f4"></div>
<div class="t" style="left:596.3px;top:640.0px;font-size:8px;font-weight:400;-webkit-text-stroke-width:0.3px;color:#333"><span style="color:#f2b51d">⚠</span> No me Sale la Copia</div>
<div class="t" style="left:596.3px;top:651.6px;font-size:8px;font-weight:400;-webkit-text-stroke-width:0.3px;color:#333">de Seguridad de</div>
<div class="t" style="left:596.3px;top:663.2px;font-size:8px;font-weight:400;-webkit-text-stroke-width:0.3px;color:#333">WhatsApp <span style="color:#6a4fc8">✔</span> SOLUCION</div>
<div class="t" style="left:596.3px;top:675.5px;font-size:4.5px;color:#777">5 horas</div>
<div class="a" style="left:700.4px;top:576px;width:104.6px;height:57px;background:#e62228;overflow:hidden">
<div class="t" style="left:0px;top:9.0px;width:45px;text-align:center;font-size:5.7px;font-weight:700;color:#ffffff;letter-spacing:0px;-webkit-text-stroke:0.35px #ffffff">NO ME SALE</div>
<div class="t" style="left:0px;top:16.0px;width:45px;text-align:center;font-size:5.7px;font-weight:700;color:#ffffff;letter-spacing:0px;-webkit-text-stroke:0.35px #ffffff">EL NÚMERO</div>
<div class="t" style="left:0px;top:23.0px;width:45px;text-align:center;font-size:5.7px;font-weight:700;color:#ffffff;letter-spacing:0px;-webkit-text-stroke:0.35px #ffffff">DE MENSAJES</div>
<div class="t" style="left:0px;top:30.0px;width:45px;text-align:center;font-size:5.7px;font-weight:700;color:#ffffff;letter-spacing:0px;-webkit-text-stroke:0.35px #ffffff">WHATSAPP</div>
<div class="a" style="left:45.099999999999994px;top:-0.5px;width:58px;height:58px;border-radius:50%;background:#fff;border:2px solid #111"></div>
<div class="a" style="left:-4px;top:40px;width:36px;height:36px;border-radius:50%;background:#fff"></div>
<div class="a" style="left:0;top:46px;width:29px;height:11px;background:#ea5a72"></div>
<svg class="a" style="left:3px;top:48.5px" width="6" height="6"><path d="M0.5 0.5 L5.5 3 L0.5 5.5z" fill="#fff"/></svg>
<div class="t" style="left:10.5px;top:48.3px;font-size:6.2px;font-weight:700;color:#fff">Video</div>
</div>
<div class="a" style="left:700.4px;top:633px;width:104.6px;height:48px;background:#f4f4f4"></div>
<div class="t" style="left:706.4px;top:640.0px;font-size:8px;font-weight:400;-webkit-text-stroke-width:0.3px;color:#333"><span style="color:#f2b51d">⚠</span> No me Sale el Numero</div>
<div class="t" style="left:706.4px;top:651.6px;font-size:8px;font-weight:400;-webkit-text-stroke-width:0.3px;color:#333">de Mensajes en</div>
<div class="t" style="left:706.4px;top:663.2px;font-size:8px;font-weight:400;-webkit-text-stroke-width:0.3px;color:#333">WhatsApp <span style="color:#6a4fc8">✔</span> SOLUCION</div>
<div class="t" style="left:706.4px;top:675.5px;font-size:4.5px;color:#777">5 horas</div>
<div class="a" style="left:810.4px;top:576px;width:104.6px;height:57px;background:#f4511e;overflow:hidden">
<div class="t" style="left:0px;top:2.0px;width:45px;text-align:center;font-size:5.9px;font-weight:700;color:#ffffff;letter-spacing:0px;-webkit-text-stroke:0.35px #ffffff">POR QUÉ NO</div>
<div class="t" style="left:0px;top:9.9px;width:45px;text-align:center;font-size:5.9px;font-weight:700;color:#ffffff;letter-spacing:0px;-webkit-text-stroke:0.35px #ffffff">ME SALE LA</div>
<div class="t" style="left:0px;top:17.9px;width:45px;text-align:center;font-size:5.9px;font-weight:700;color:#ffffff;letter-spacing:0px;-webkit-text-stroke:0.35px #ffffff">FOTO DE</div>
<div class="t" style="left:0px;top:25.8px;width:45px;text-align:center;font-size:5.9px;font-weight:700;color:#ffffff;letter-spacing:0px;-webkit-text-stroke:0.35px #ffffff">PERFIL EN</div>
<div class="t" style="left:0px;top:33.6px;width:45px;text-align:center;font-size:5.9px;font-weight:700;color:#ffffff;letter-spacing:0px;-webkit-text-stroke:0.35px #ffffff">WHATSAPP</div>
<div class="a" style="left:45.099999999999994px;top:-0.5px;width:58px;height:58px;border-radius:50%;background:#fff;border:2px solid #111"></div>
<div class="a" style="left:-4px;top:40px;width:36px;height:36px;border-radius:50%;background:#fff"></div>
<div class="a" style="left:0;top:46px;width:29px;height:11px;background:#ea5a72"></div>
<svg class="a" style="left:3px;top:48.5px" width="6" height="6"><path d="M0.5 0.5 L5.5 3 L0.5 5.5z" fill="#fff"/></svg>
<div class="t" style="left:10.5px;top:48.3px;font-size:6.2px;font-weight:700;color:#fff">Video</div>
</div>
<div class="a" style="left:810.4px;top:633px;width:104.6px;height:48px;background:#f4f4f4"></div>
<div class="t" style="left:816.4px;top:640.0px;font-size:8px;font-weight:400;-webkit-text-stroke-width:0.3px;color:#333"><span style="color:#d93030">❓</span> Por qué No me Sale la</div>
<div class="t" style="left:816.4px;top:651.6px;font-size:8px;font-weight:400;-webkit-text-stroke-width:0.3px;color:#333">Foto de Perfil en</div>
<div class="t" style="left:816.4px;top:663.2px;font-size:8px;font-weight:400;-webkit-text-stroke-width:0.3px;color:#333">WhatsApp <span style="color:#6a4fc8">✔</span> SOLUCION</div>
<div class="t" style="left:816.4px;top:675.5px;font-size:4.5px;color:#777">5 horas</div>
<svg class="a" style="left:416.6px;top:576px" width="56" height="57" viewBox="0 0 56 57"><defs><clipPath id="cc0"><circle cx="28" cy="28.5" r="27"/></clipPath></defs><g clip-path="url(#cc0)"><path d="M2 30 C2 18 8 9 20 4 L34 6 C37 14 36 40 31 48 L17 56 C8 52 2 42 2 30Z" fill="#1e2a30"/><path d="M10 33 L25 25 L28 31 L13 44Z" fill="#f2bf1e"/><path d="M12 34 L24 28 L20 36z" fill="#ffe080"/><circle cx="29" cy="14" r="6.2" fill="#e8212e"/><path d="M27.5 11.5 h3 l-2.2 5.5" stroke="#fff" stroke-width="1.4" fill="none"/><circle cx="43.5" cy="17.5" r="5.6" fill="#fff" stroke="#2cb742" stroke-width="1.2"/><circle cx="43.5" cy="17.5" r="4.2" fill="#2cb742"/><path d="M41.5 15.9 c0 2 1.5 3.6 3.9 3.7" stroke="#fff" stroke-width="1.3" fill="none"/><path d="M39.0 22.5 l1.2-3 l2 1.6z" fill="#2cb742"/><path d="M16 54 L48 35 L58 44 L26 62Z" fill="#f4f4f4" stroke="#222" stroke-width="1"/><rect x="35" y="45" width="4" height="3" fill="#bbb" transform="rotate(-30 37 46)"/></g></svg>
<svg class="a" style="left:526.6px;top:576px" width="56" height="57" viewBox="0 0 56 57"><defs><clipPath id="cc1"><circle cx="28" cy="28.5" r="27"/></clipPath></defs><g clip-path="url(#cc1)"><text x="8.5" y="20" font-family="Liberation Sans" font-weight="700" font-size="9.6" fill="#1a1a1a" letter-spacing="-0.3">pluto</text><circle cx="40" cy="17.5" r="3.3" fill="#1a1a1a"/><path d="M40 14.2 a3.3 3.3 0 0 0 0 6.6z" fill="#e8453c"/><circle cx="40" cy="17.5" r="1.3" fill="#fff"/><circle cx="12" cy="33.5" r="3.8" fill="#dff3f5" stroke="#c8c8d0" stroke-width="1.3"/><path d="M15 36 L21.5 41" stroke="#1a1a1a" stroke-width="1.8" stroke-linecap="round"/><circle cx="38.5" cy="36.5" r="9.5" fill="#d8f0f2" stroke="#d0d0d8" stroke-width="2.6"/><path d="M30 44 L24 49" stroke="#ddd" stroke-width="3"/><path d="M25 48 L13 56" stroke="#1a1a1a" stroke-width="5"/></g></svg>
<svg class="a" style="left:636.9px;top:576px" width="56" height="57" viewBox="0 0 56 57"><defs><clipPath id="cc2"><circle cx="28" cy="28.5" r="27"/></clipPath></defs><g clip-path="url(#cc2)"><path d="M6 18 L30 5 L35 8 L35 42 L14 54 L6 48z" fill="#3a3a3a"/><path d="M12 15 L28 7 L28 21 L12 29z" fill="#d8d8d8"/><rect x="16" y="14" width="3" height="9" fill="#333"/><path d="M10 36 L31 25 L31 42 L10 53z" fill="#f4f4f4"/><path d="M12 40 L29 31 M12 44 L29 35 M12 48 L29 39" stroke="#555" stroke-width="0.9"/><circle cx="34" cy="7" r="2.4" fill="#f2c12e"/><circle cx="42.5" cy="27" r="5.6" fill="#fff" stroke="#2cb742" stroke-width="1.2"/><circle cx="42.5" cy="27" r="4.2" fill="#2cb742"/><path d="M40.5 25.4 c0 2 1.5 3.6 3.9 3.7" stroke="#fff" stroke-width="1.3" fill="none"/><path d="M38.0 32 l1.2-3 l2 1.6z" fill="#2cb742"/></g></svg>
<svg class="a" style="left:747.0px;top:576px" width="56" height="57" viewBox="0 0 56 57"><defs><clipPath id="cc3"><circle cx="28" cy="28.5" r="27"/></clipPath></defs><g clip-path="url(#cc3)"><path d="M18 6.5 C21 6.5 22 9.5 23 12 C31 15 33 27 33.5 33 C36.5 35.5 38.5 40 37.5 44 C35.5 50 30 54 25 58 L3 58 C1 52 1.5 46 4.5 42 C5.5 30 8 17 13.5 12 C14.5 9 15.5 6.5 18 6.5Z" fill="#f7c81a"/><ellipse cx="30" cy="19.5" rx="5.8" ry="8" fill="#e8262e" transform="rotate(15 30 19.5)"/><rect x="29" y="14" width="2.4" height="10" rx="1" fill="#fff" transform="rotate(15 30 19.5)"/><path d="M35.5 7 L39 10.5 L35.5 14 L32 10.5z" fill="#f2c12e" stroke="#b08010" stroke-width="0.5"/><circle cx="45.5" cy="28" r="5.6" fill="#fff" stroke="#2cb742" stroke-width="1.2"/><circle cx="45.5" cy="28" r="4.2" fill="#2cb742"/><path d="M43.5 26.4 c0 2 1.5 3.6 3.9 3.7" stroke="#fff" stroke-width="1.3" fill="none"/><path d="M41.0 33 l1.2-3 l2 1.6z" fill="#2cb742"/></g></svg>
<svg class="a" style="left:857.0px;top:576px" width="56" height="57" viewBox="0 0 56 57"><defs><clipPath id="cc4"><circle cx="28" cy="28.5" r="27"/></clipPath></defs><g clip-path="none"><rect x="13.8" y="2" width="19" height="14" rx="2" fill="#3f8ae6" stroke="#24508a" stroke-width="0.7"/><text x="23.3" y="13" text-anchor="middle" font-family="Liberation Sans" font-size="10" font-weight="700" fill="#1f3a6a">?</text><path d="M20 16 v4" stroke="#1f3a4a" stroke-width="1"/><rect x="1.5" y="20" width="35" height="38" fill="#e9f1f5" stroke="#17394a" stroke-width="1.8"/><ellipse cx="17.5" cy="35.5" rx="8" ry="8.5" fill="#5a1f14"/><ellipse cx="17.5" cy="38" rx="5.3" ry="6.5" fill="#f7c39a"/><rect x="15" y="42" width="5" height="4" fill="#f7c39a"/><path d="M5 56.5 C6 47 30 47 31 56.5z" fill="#f0502a"/><path d="M31 22 L35.5 26.5 L31 31 L26.5 26.5z" fill="#f5c21e" stroke="#a07a10" stroke-width="0.5"/><circle cx="49" cy="27" r="5.6" fill="#fff" stroke="#2cb742" stroke-width="1.2"/><circle cx="49" cy="27" r="4.2" fill="#2cb742"/><path d="M47 25.4 c0 2 1.5 3.6 3.9 3.7" stroke="#fff" stroke-width="1.3" fill="none"/><path d="M44.5 32 l1.2-3 l2 1.6z" fill="#2cb742"/></g></svg>
<div class="a" style="left:905px;top:632px;width:15px;height:15px;border-radius:50%;background:#e9eef4;box-shadow:0 1px 2px rgba(0,0,0,0.25)"></div>
<svg class="a" style="left:905px;top:632px" width="15" height="15"><path d="M6 4 L9.5 7.5 L6 11" fill="none" stroke="#1f5fbf" stroke-width="1.6"/></svg>
<!-- PAGE END -->
</div>
</body></html>
